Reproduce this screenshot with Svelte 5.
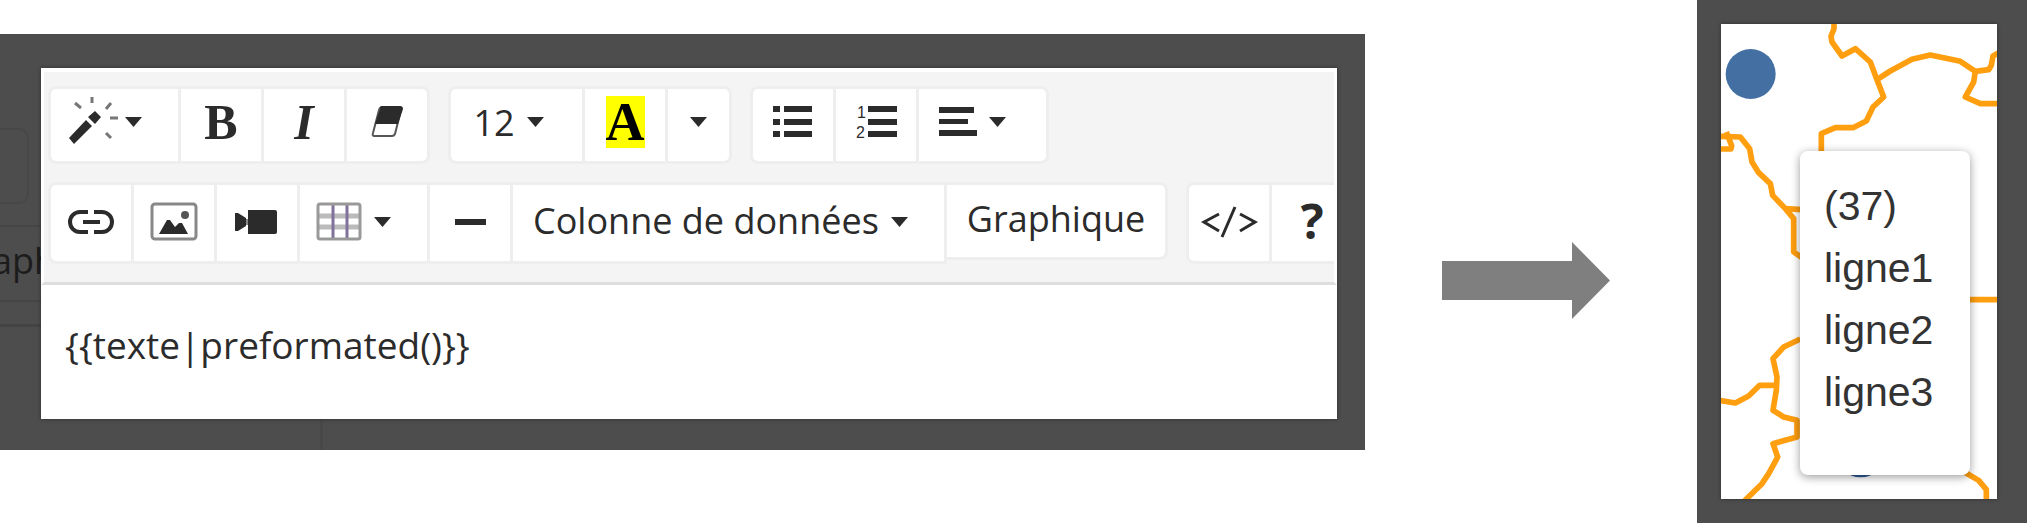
<script lang="ts">
	let content = $state('{{texte|preformated()}}');
	const lines = ['(37)', 'ligne1', 'ligne2', 'ligne3'];
</script>

{#snippet caret()}
	<svg class="caret" width="17" height="10" viewBox="0 0 17 10" aria-hidden="true">
		<path d="M0 0h17L8.500 10z" fill="currentColor"></path>
	</svg>
{/snippet}

<main class="page">
	<section class="editor-panel">
		<div class="backdrop" aria-hidden="true">
			<div class="ghost-field"></div>
			<div class="ghost-button">aph</div>
			<div class="ghost-frame"></div>
		</div>
		<div class="editor">
			<div class="toolbar" role="toolbar" aria-label="Mise en forme">
				<div class="row">
					<div class="group">
						<button class="btn drop" aria-label="Style">
							<svg class="icon" width="45" height="60" viewBox="0 0 45 60" fill="currentColor">
								<path d="M1 46l5 6 18-18-6-6zM20 25l7-6 6 6-6 7z"></path>
								<path d="M24 5v6M7 11l6 5M43 11l-5 6M42 26h8M38 41l5 5" stroke="#777" stroke-width="3" fill="none"></path>
							</svg>
							{@render caret()}
						</button>
						<button class="btn serif" aria-label="Gras">B</button>
						<button class="btn serif italic" aria-label="Italique">I</button>
						<button class="btn" aria-label="Effacer la mise en forme">
							<svg class="icon" width="32" height="60" viewBox="0 0 32 60">
								<path d="M11 15h17q3 0 2 3l-6 24q-1 2-3 2H3q-2 0-1-3l6-23q1-3 3-3z" fill="#fff" stroke="#555" stroke-width="2"></path>
								<path d="M11 14h18q3 0 3 3l-5 15H4l5-15q0-3 2-3z" fill="currentColor"></path>
							</svg>
						</button>
					</div>
					<div class="group">
						<button class="btn drop size">12 {@render caret()}</button>
						<button class="btn" aria-label="Couleur"><span class="color">A</span></button>
						<button class="btn narrow" aria-label="Plus de couleurs">{@render caret()}</button>
					</div>
					<div class="group">
						<button class="btn" aria-label="Liste à puces">
							<svg class="icon" width="40" height="60" viewBox="0 0 40 60" fill="currentColor">
								<path d="M0 14h7v6H0zM0 27h7v6H0zM0 39h7v6H0zM11 14h28v6H11zM11 27h28v6H11zM11 39h28v6H11z"></path>
							</svg>
						</button>
						<button class="btn" aria-label="Liste numérotée">
							<svg class="icon" width="41" height="60" viewBox="0 0 41 60" fill="currentColor">
								<path d="M12 14h29v6H12zM12 27h29v6H12zM12 39h29v6H12z"></path>
								<text class="digit" x="1" y="26">1</text>
								<text class="digit" x="0" y="46">2</text>
							</svg>
						</button>
						<button class="btn drop" aria-label="Paragraphe">
							<svg class="icon" width="38" height="60" viewBox="0 0 38 60" fill="currentColor">
								<path d="M0 15h35v6H0zM0 27h29v5H0zM0 38h38v6H0z"></path>
							</svg>
							{@render caret()}
						</button>
					</div>
				</div>
				<div class="row second">
					<div class="group">
						<button class="btn" aria-label="Lien">
							<svg class="icon" width="46" height="60" viewBox="0 0 46 60" fill="none" stroke="currentColor" stroke-width="4">
								<path d="M20 22h-8a10 10 0 0 0 0 20h8M26 22h8a10 10 0 0 1 0 20h-8M15 32h17"></path>
							</svg>
						</button>
						<button class="btn" aria-label="Image">
							<svg class="icon" width="47" height="60" viewBox="0 0 47 60" fill="currentColor">
								<rect x="1" y="14" width="44" height="35" rx="3" fill="none" stroke="#888" stroke-width="3"></rect>
								<path d="M8 44l8-14h3l5 7 4-4h3l6 11z"></path>
								<circle cx="34" cy="25" r="4" fill="#555"></circle>
							</svg>
						</button>
						<button class="btn" aria-label="Vidéo">
							<svg class="icon" width="44" height="60" viewBox="0 0 44 60" fill="currentColor">
								<path d="M0 23h3l8 5v8l-8 5H0zM13 20h27q2 0 2 2v20q0 2-2 2H13z"></path>
								<path d="M11 29h2v6h-2z" fill="#888"></path>
							</svg>
						</button>
						<button class="btn drop" aria-label="Tableau">
							<svg class="icon" width="45" height="60" viewBox="0 0 45 60" fill="none">
								<path d="M2 26h41M2 37h41" stroke="#bbb" stroke-width="5"></path>
								<path d="M16 14v35M30 14v35" stroke="#80729a" stroke-width="3"></path>
								<rect x="1" y="14" width="42" height="35" rx="2" stroke="#999" stroke-width="3"></rect>
							</svg>
							{@render caret()}
						</button>
						<button class="btn" aria-label="Ligne horizontale">
							<svg class="icon" width="31" height="60" viewBox="0 0 31 60">
								<path d="M0 32h31" stroke="currentColor" stroke-width="6"></path>
							</svg>
						</button>
						<button class="btn drop column">Colonne de données {@render caret()}</button>
						<button class="btn chart">Graphique</button>
					</div>
					<div class="group">
						<button class="btn" aria-label="Code source">
							<svg class="icon" width="56" height="60" viewBox="0 0 56 60" fill="none" stroke="currentColor" stroke-width="3">
								<path d="M18 24L3 32l15 9M34 17L21 47M39 24l15 8-15 9"></path>
							</svg>
						</button>
						<button class="btn help" aria-label="Aide">?</button>
					</div>
				</div>
			</div>
			<textarea class="text" rows="1" aria-label="Contenu" spellcheck="false" bind:value={content}></textarea>
		</div>
	</section>

	<div class="arrow">
		<svg width="168" height="77" viewBox="0 0 168 77" aria-hidden="true">
			<path d="M0 19h130V0l38 38.500L130 77V58H0z" fill="#7f7f7f"></path>
		</svg>
	</div>

	<section class="map-panel">
		<div class="map">
			<svg class="tiles" viewBox="92 71 828 1426" preserveAspectRatio="xMinYMin slice" aria-hidden="true">
				<g fill="none" stroke="#ff9e0f" stroke-width="17" stroke-linejoin="round">
					<path d="M431 71L431 85 422 108 425 125 455 167 495 145 540 185 560 238 580 290 548 320 528 362 488 382 435 382 393 400 393 455"></path>
					<path d="M560 238L600 212 665 177 720 164 810 183 855 213 895 208 903 195 908 167 924 158"></path>
					<path d="M855 213L850 245 825 290 870 310 924 310"></path>
					<path d="M88 408L150 410 178 445 185 485 205 517 240 550 247 585 285 625 310 655 310 755 335 772"></path>
					<path d="M285 625L335 628M88 446L122 446 124 436 108 395"></path>
					<path d="M330 1016L280 1040 248 1075 260 1130 258 1170 248 1230 280 1250 320 1260 320 1310 248 1330 262 1370 235 1420 215 1450 160 1504"></path>
					<path d="M88 1200L135 1208 175 1187 208 1155 260 1155M830 898L924 898"></path>
					<path d="M822 1415L865 1440 888 1468 888 1500"></path>
				</g>
				<circle cx="181" cy="221" r="75" fill="#436fa3"></circle>
				<circle cx="511" cy="1356" r="75" fill="#2f5c96"></circle>
			</svg>
			<div class="popup">
				{#each lines as line}
					<div>{line}</div>
				{/each}
			</div>
		</div>
	</section>
</main>

<style>
	:global(body) {
		margin: 0;
		background: #fff;
	}

	.page {
		display: flex;
		align-items: flex-start;
		font-family: "Open Sans", "Noto Sans", sans-serif;
		color: #2b2b2b;
	}

	.editor-panel {
		position: relative;
		flex: 1;
		min-width: 0;
		box-sizing: border-box;
		margin-top: 34px;
		padding: 34px 28px 31px 41px;
		background: #4d4d4d;
	}

	.backdrop {
		position: absolute;
		inset: 0;
		overflow: hidden;
		display: flex;
		flex-direction: column;
	}

	.ghost-field {
		width: 27px;
		height: 72px;
		margin-top: 94px;
		border: 2px solid #484848;
		border-left: none;
		border-radius: 0 10px 10px 0;
	}

	.ghost-button {
		width: 120px;
		margin-top: 21px;
		margin-left: -8px;
		padding-bottom: 5px;
		border: solid #454545;
		border-width: 2px 0;
		line-height: 68px;
		font-size: 36px;
		color: #1c1c1c;
	}

	.ghost-frame {
		flex: 1;
		width: 320px;
		margin-top: 22px;
		border-top: 3px solid #444;
		border-right: 3px solid #484848;
	}

	.editor {
		position: relative;
		background: #fff;
		box-shadow: 0 0 4px rgba(0, 0, 0, 0.4);
	}

	.toolbar {
		display: flex;
		flex-direction: column;
		gap: 18px;
		padding: 14px 0 18px 4px;
		border: solid #fff;
		border-width: 4px 3px 3px;
		border-bottom-color: #dedede;
		background: #f4f4f4;
	}

	.row {
		display: flex;
		gap: 18px;
		overflow: hidden;
	}

	.group {
		display: flex;
		flex-shrink: 0;
	}

	.btn {
		display: flex;
		align-items: center;
		justify-content: center;
		box-sizing: border-box;
		min-width: 86px;
		height: 78px;
		padding: 0 0 6px;
		border: 3px solid #eee;
		background: #fff;
		font: inherit;
		font-size: 36px;
		color: inherit;
		white-space: nowrap;
		cursor: pointer;
	}

	.btn + .btn {
		margin-left: -3px;
	}

	.btn:first-child {
		border-radius: 8px 0 0 8px;
	}

	.btn:last-child {
		border-radius: 0 8px 8px 0;
	}

	.second .btn {
		height: 82px;
	}

	.second .chart {
		height: 78px;
		padding: 0 20px 6px;
	}

	.drop {
		gap: 12px;
		min-width: 133px;
		padding-left: 16px;
		padding-right: 36px;
	}

	.size {
		min-width: 137px;
		padding-left: 20px;
	}

	.column {
		padding-left: 20px;
	}

	.narrow {
		min-width: 67px;
	}

	.icon {
		flex-shrink: 0;
		overflow: visible;
	}

	.caret {
		flex-shrink: 0;
	}

	.second .caret {
		margin-top: 4px;
	}

	.btn.serif {
		font-family: "Liberation Serif", serif;
		font-size: 50px;
		font-weight: 700;
	}

	.italic {
		font-style: italic;
	}

	.color {
		background: #ff0;
		color: #000;
		font-family: "Liberation Serif", serif;
		font-size: 54px;
		font-weight: 700;
		line-height: 52px;
	}

	.digit {
		font-family: "Liberation Sans", Arial, sans-serif;
		font-size: 16px;
	}

	.btn.help {
		font-size: 48px;
		font-weight: 700;
	}

	.text {
		display: block;
		box-sizing: border-box;
		width: 100%;
		padding: 31px 24px 45px;
		border: none;
		outline: none;
		resize: none;
		overflow: hidden;
		background: transparent;
		font: inherit;
		font-size: 37px;
		line-height: 58px;
		color: inherit;
	}

	.arrow {
		flex-shrink: 0;
		padding: 242px 87px 0 77px;
	}

	.arrow svg {
		display: block;
	}

	.map-panel {
		flex-shrink: 0;
		padding: 24px 30px 24px 24px;
		background: #4d4d4d;
	}

	.map {
		position: relative;
		width: 276px;
		background: #fff;
		box-shadow: 0 0 4px rgba(0, 0, 0, 0.4);
	}

	.tiles {
		display: block;
		width: 100%;
	}

	.popup {
		position: absolute;
		left: 79px;
		top: 127px;
		box-sizing: border-box;
		width: 170px;
		padding: 24px 24px 52px;
		border-radius: 8px;
		background: #fff;
		box-shadow: 0 2px 10px rgba(0, 0, 0, 0.4);
		font-family: "Liberation Sans", Arial, sans-serif;
		font-size: 41px;
		line-height: 62px;
		color: #333;
	}
</style>
